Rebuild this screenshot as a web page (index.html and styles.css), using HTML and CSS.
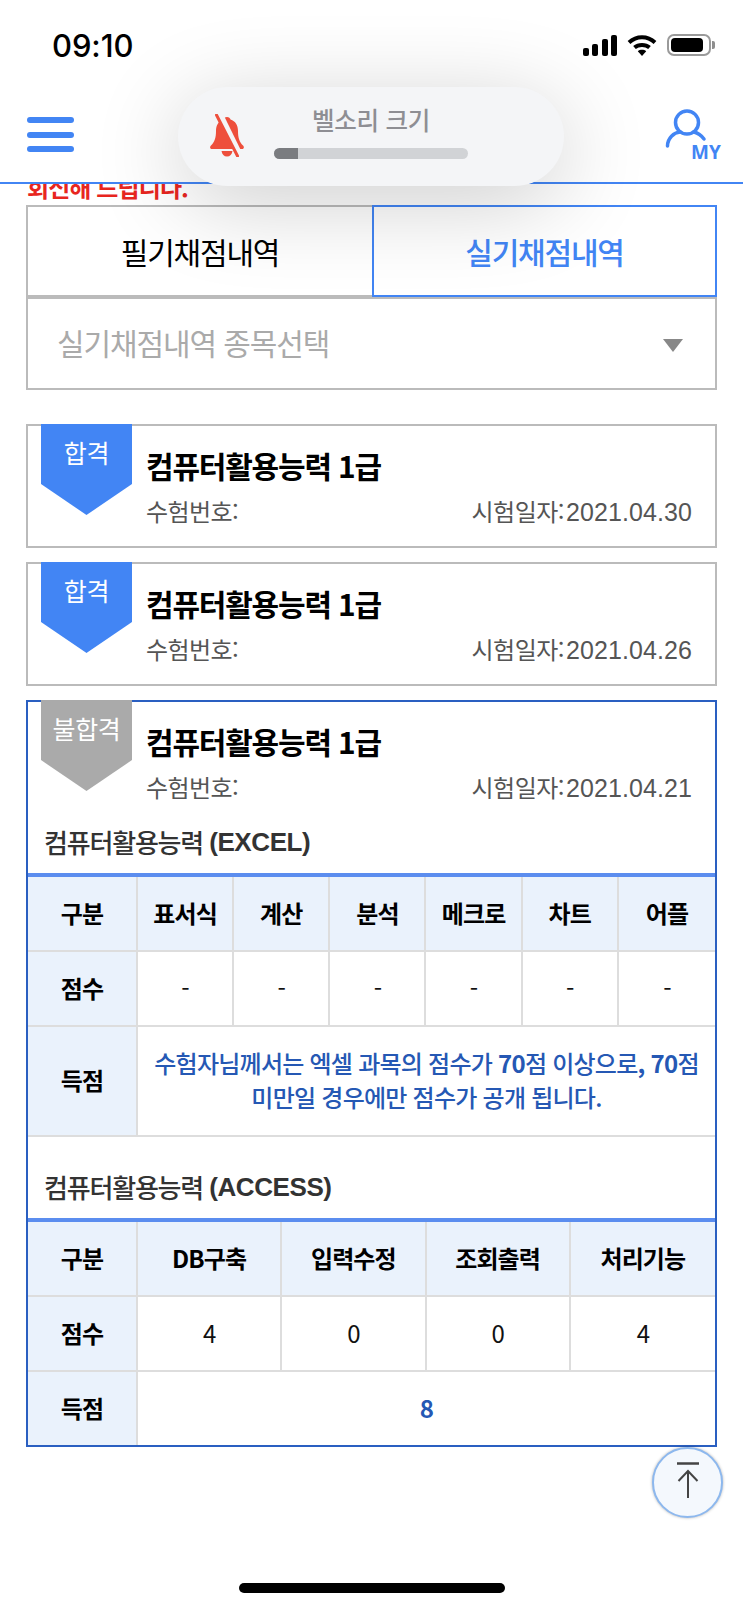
FILE: index.html
```html
<!DOCTYPE html>
<html lang="ko">
<head>
<meta charset="utf-8">
<title>실기채점내역</title>
<link rel="stylesheet" href="styles.css">
</head>
<body>
<div class="page">
  <div class="status">
    <span class="time">09:10</span>
    <div class="status-icons">
      <div class="signal"><i class="b1"></i><i class="b2"></i><i class="b3"></i><i class="b4"></i></div>
      <svg class="wifi" viewBox="0 0 30 22" width="30" height="22"><path d="M2 8.5C9.500 1.500 20.500 1.500 28 8.500" fill="none" stroke="#000" stroke-width="4"/><path d="M7.500 13.500C11.500 10 18.500 10 22.500 13.500" fill="none" stroke="#000" stroke-width="4"/><path d="M10.800 17.200C13 15.300 17 15.300 19.200 17.200L15 22Z" fill="#000"/></svg>
      <div class="battery"><div class="battery-fill"></div></div><div class="battery-nub"></div>
    </div>
  </div>
  <header class="topbar">
    <div class="burger"><i></i><i></i><i></i></div>
    <div class="my">
      <svg viewBox="0 0 42 40" width="42" height="40"><circle cx="22" cy="14.500" r="11.500" fill="none" stroke="#4285f4" stroke-width="3.500"/><path d="M2.500 38C2.500 30 9 24.500 15 24M29 24C33 25 36 27 39 31" fill="none" stroke="#4285f4" stroke-width="3.500" stroke-linecap="round"/></svg>
      <span class="my-label">MY</span>
    </div>
  </header>
  <div class="notice"><p>회신해 드립니다.</p></div>
  <main class="content">
    <div class="tabs">
      <div class="tab">필기채점내역</div>
      <div class="tab active">실기채점내역</div>
    </div>
    <div class="select"><span>실기채점내역 종목선택</span><i class="caret"></i></div>

    <section class="card">
      <div class="head">
        <div class="badge pass">합격</div>
        <div class="info">
          <h2>컴퓨터활용능력 1급</h2>
          <div class="meta"><span>수험번호:</span><span>시험일자:<span class="num">2021.04.30</span></span></div>
        </div>
      </div>
    </section>
    <section class="card">
      <div class="head">
        <div class="badge pass">합격</div>
        <div class="info">
          <h2>컴퓨터활용능력 1급</h2>
          <div class="meta"><span>수험번호:</span><span>시험일자:<span class="num">2021.04.26</span></span></div>
        </div>
      </div>
    </section>
    <section class="card open">
      <div class="head">
        <div class="badge fail">불합격</div>
        <div class="info">
          <h2>컴퓨터활용능력 1급</h2>
          <div class="meta"><span>수험번호:</span><span>시험일자:<span class="num">2021.04.21</span></span></div>
        </div>
      </div>
      <h3 class="sub first">컴퓨터활용능력 <b>(EXCEL)</b></h3>
      <table class="score">
        <tr><th>구분</th><th>표서식</th><th>계산</th><th>분석</th><th>메크로</th><th>차트</th><th>어플</th></tr>
        <tr><th>점수</th><td>-</td><td>-</td><td>-</td><td>-</td><td>-</td><td>-</td></tr>
        <tr class="tall"><th>득점</th><td colspan="6" class="msg">수험자님께서는 엑셀 과목의 점수가 <b>70</b>점 이상으로<b>, 70</b>점<br>미만일 경우에만 점수가 공개 됩니다.</td></tr>
      </table>
      <h3 class="sub second">컴퓨터활용능력 <b>(ACCESS)</b></h3>
      <table class="score last">
        <tr><th>구분</th><th>DB구축</th><th>입력수정</th><th>조회출력</th><th>처리기능</th></tr>
        <tr><th>점수</th><td>4</td><td>0</td><td>0</td><td>4</td></tr>
        <tr><th>득점</th><td colspan="4" class="total">8</td></tr>
      </table>
    </section>
  </main>

  <div class="volume">
    <svg class="bell" viewBox="0 0 36 43" width="36" height="43">
      <path d="M18 3C20 3 21 4 21.500 5.500C26.500 7 29 11.500 29 17C29 24 30.500 28 34 31.500C35.500 33 35 35 33 35H3C1 35 .5 33 2 31.500C5.500 28 7 24 7 17C7 11.500 9.500 7 14.500 5.500C15 4 16 3 18 3Z" fill="#ee4f3c"/>
      <path d="M12.500 37H23.500C23 40.500 21 42.500 18 42.500C15 42.500 13 40.500 12.500 37Z" fill="#ee4f3c"/>
      <path d="M10 -1L32 44" stroke="#f4f5f7" stroke-width="6.500"/>
      <path d="M7.500 1L28.500 42" stroke="#ee4f3c" stroke-width="3" stroke-linecap="round"/>
    </svg>
    <div class="vol-main">
      <div class="vol-label">벨소리 크기</div>
      <div class="vol-track"><div class="vol-level"></div></div>
    </div>
  </div>

  <div class="to-top">
    <svg viewBox="0 0 30 42" width="30" height="42"><path d="M4 1.500H26" stroke="#444" stroke-width="2.500"/><path d="M15 36V9M5.500 19L15 9L24.500 19" fill="none" stroke="#444" stroke-width="2"/></svg>
  </div>
  <div class="home"></div>
</div>
</body>
</html>
```

FILE: styles.css
```css
* { box-sizing: border-box; }
html, body { margin: 0; padding: 0; background: #fff; }
body { font-family: "Noto Sans CJK KR", "Noto Sans", sans-serif; color: #000; }
.page { position: relative; height: 100vh; overflow: hidden; }

.status { height: 72px; display: flex; justify-content: space-between; align-items: flex-start; padding: 28px 28px 0 52px; }
.time { font-family: Inter, "Liberation Sans", sans-serif; font-size: 31px; font-weight: 500; line-height: 36px; letter-spacing: -.1px; }
.status-icons { display: flex; align-items: center; height: 22px; margin-top: 6px; }
.signal { display: flex; align-items: flex-end; gap: 3.5px; height: 21px; margin-right: 10px; }
.signal i { display: block; width: 6px; background: #000; border-radius: 2px; }
.signal .b1 { height: 8px; }
.signal .b2 { height: 12px; }
.signal .b3 { height: 17px; }
.signal .b4 { height: 21px; }
.wifi { margin-right: 10px; }
.battery { width: 44px; height: 22px; border: 2px solid #9a9a9a; border-radius: 7px; padding: 2px; }
.battery-fill { width: 32px; height: 14px; background: #000; border-radius: 4px; }
.battery-nub { width: 3px; height: 8px; margin-left: 1px; background: #8e8e8e; border-radius: 0 2px 2px 0; }

.topbar { height: 112px; margin-top: 0; border-bottom: 2px solid #4285f4; background: #fff; display: flex; justify-content: space-between; padding: 45px 22px 0 27px; position: relative; }
.burger { display: flex; flex-direction: column; gap: 8.500px; width: 47px; }
.burger i { display: block; height: 6px; border-radius: 3px; background: #4285f4; }
.my { position: relative; width: 56px; height: 50px; margin-top: -9px; }
.my svg { display: block; }
.my-label { position: absolute; left: 26px; top: 33px; font-family: "Open Sans", sans-serif; font-weight: 700; font-size: 19px; line-height: 22px; color: #4285f4; letter-spacing: .2px; }

.notice { height: 21px; padding: 0 27px; overflow: hidden; }
.notice p { margin: -12px 0 0; font-size: 24px; line-height: 30px; font-weight: 700; color: #e8261f; letter-spacing: -.9px; }

.content { padding: 0 26px; }
.tabs { display: grid; grid-template-columns: 346px 345px; height: 92px; }
.tab { display: flex; align-items: center; justify-content: center; font-size: 30px; font-weight: 400; letter-spacing: -1.2px; border: 2px solid #bbb; border-right: 0; }
.tab.active { color: #4285f4; border: 2px solid #4285f4; font-weight: 500; }
.select { display: flex; align-items: center; justify-content: space-between; height: 93px; border: 2px solid #bbb; padding: 0 32px 0 29px; margin-bottom: 34px; font-size: 30px; color: #aaa; letter-spacing: -1.1px; }
.select span { margin-top: -3px; }
.caret { width: 0; height: 0; margin-top: 3px; border-left: 10px solid transparent; border-right: 10px solid transparent; border-top: 13px solid #888; }

.card { border: 2px solid #bbb; margin-bottom: 14px; }
.card.open { border-color: #2a5fc1; }
.head { display: flex; height: 120px; padding-left: 13px; }
.badge { flex: none; width: 91px; height: 91px; margin-top: -2px; padding-top: 12px; text-align: center; color: #fff; font-size: 25px; line-height: 32px; font-weight: 400; letter-spacing: -.3px; clip-path: polygon(0 0, 100% 0, 100% 66%, 50% 100%, 0 66%); }
.badge.pass { background: #4285f4; }
.badge.fail { background: #aaa; letter-spacing: -.3px; }
.info { flex: 1; padding: 20px 23px 0 14px; }
.info h2 { margin: 0; font-size: 30px; line-height: 38px; font-weight: 700; letter-spacing: -1.2px; }
.meta { display: flex; justify-content: space-between; margin-top: 10px; font-size: 24px; line-height: 34px; color: #555; letter-spacing: -.55px; }
.num { font-family: "Liberation Sans", sans-serif; font-size: 25px; letter-spacing: .1px; margin-left: 2px; }

.sub { display: flex; align-items: flex-end; margin: 0; padding: 0 16px 14px; font-size: 26px; line-height: 34px; font-weight: 500; color: #333; letter-spacing: -1.2px; white-space: pre; }
.sub.first { height: 51px; }
.sub.second { height: 81px; }
.sub b { font-weight: 700; font-family: "Liberation Sans", sans-serif; letter-spacing: -.4px; }

.score { width: 100%; table-layout: fixed; border-collapse: separate; border-spacing: 0; border-top: 4px solid #5b8def; }
.score th, .score td { height: 75px; padding: 0 0 3px; text-align: center; vertical-align: middle; border-right: 2px solid #ddd; border-bottom: 2px solid #ddd; font-size: 24px; letter-spacing: -.9px; }
.score tr > :first-child { width: 110px; }
.score tr > :last-child { border-right: 0; }
.score th { font-weight: 700; background: #eaf2fc; }
.score tr + tr td { background: #fff; color: #111; }
.score .tall th, .score .tall td { height: 110px; }
.score.last tr:last-child th, .score.last tr:last-child td { height: 73px; border-bottom: 0; }
.score .msg { padding: 0 0 2px 0; color: #2558b4; font-weight: 500; line-height: 34px; letter-spacing: -.75px; }
.score .msg b { font-weight: 700; }
.score .total { color: #2558b4; font-weight: 700; }

.volume { position: absolute; left: 178px; top: 87px; width: 386px; height: 99px; display: flex; align-items: flex-start; background: #f4f5f7; border-radius: 50px; box-shadow: 0 16px 90px rgba(0,0,0,.2); }
.bell { margin: 27px 0 0 31px; flex: none; overflow: hidden; }
.vol-main { width: 194px; margin-left: 29px; }
.vol-label { margin-top: 15px; height: 36px; text-align: center; font-size: 24.5px; line-height: 36px; font-weight: 500; color: #8e8e93; letter-spacing: -.3px; }
.vol-track { margin-top: 10px; height: 11px; border-radius: 5.500px; background: #d1d3d6; overflow: hidden; }
.vol-level { width: 24px; height: 100%; background: #7a7c80; }

.to-top { position: absolute; left: 652px; top: 1447px; width: 71px; height: 71px; border-radius: 50%; border: 2px solid #8db8ee; background: #f4f8fd; box-shadow: 0 0 3px rgba(0,0,0,.3); display: flex; align-items: center; justify-content: center; }
.home { position: absolute; left: 239px; top: 1583px; width: 266px; height: 10px; border-radius: 5px; background: #000; }
```
